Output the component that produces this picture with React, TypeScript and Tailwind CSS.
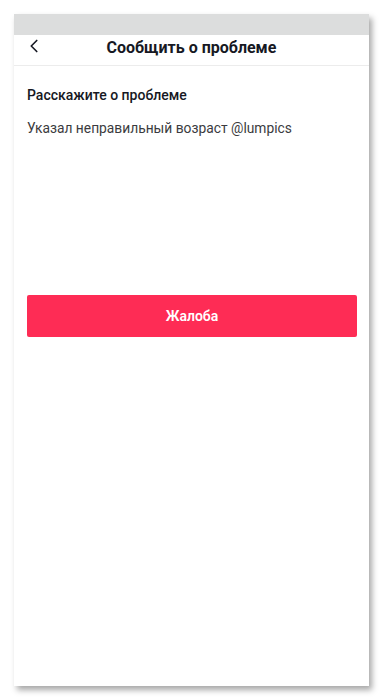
import { ChevronLeft } from "lucide-react";

export default function App() {
  return (
    <div className="w-full h-[700px] bg-white pt-[14px] pl-[14px] font-['Roboto',sans-serif]">
      <div className="w-[355px] h-[672px] bg-white flex flex-col shadow-[3px_4px_6px_rgba(0,0,0,0.35)]">
        <div className="h-[21px] bg-[#dcdddd]" />
        <div className="h-[31px] border-b border-[#ececec] flex items-center relative">
          <ChevronLeft className="absolute left-[9px] top-[0px] w-[22px] h-[22px] text-[#161823]" strokeWidth={1.8} />
          <div className="flex-1 text-center text-[16px] font-bold text-[#161823] leading-none -mt-[5px]">
            Сообщить о проблеме
          </div>
        </div>
        <div className="px-[13px] pt-[20px]">
          <div className="text-[14px] font-medium text-[#161823] leading-[18px]">
            Расскажите о проблеме
          </div>
          <div className="mt-[15px] text-[13.8px] text-[#3b3b40] leading-[18px]">
            Указал неправильный возраст @lumpics
          </div>
          <button className="mt-[158px] w-[330px] h-[42px] bg-[#fe2c55] rounded-[2px] text-white text-[14px] font-semibold">
            Жалоба
          </button>
        </div>
      </div>
    </div>
  );
}
